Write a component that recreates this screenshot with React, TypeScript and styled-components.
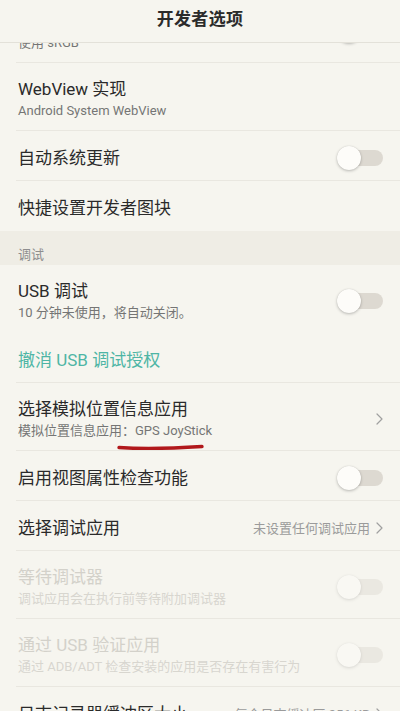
import React from "react";
import styled, { createGlobalStyle, css } from "styled-components";

const GlobalStyle = createGlobalStyle`
  html, body {
    margin: 0;
    padding: 0;
    background: #f6f5ef;
  }
  body {
    font-family: Roboto, "Noto Sans CJK SC", "Noto Sans", sans-serif;
    -webkit-font-smoothing: antialiased;
  }
`;

const Screen = styled.div`
  width: 400px;
  height: 711px;
  overflow: hidden;
  background: #f6f5ef;
  display: flex;
  flex-direction: column;
`;

const Header = styled.header`
  flex: 0 0 auto;
  height: 43px;
  border-bottom: 1px solid #e3e1d9;
  display: flex;
  align-items: center;
  justify-content: center;
  padding-bottom: 8px;
  box-sizing: border-box;
  background: #f6f5ef;
  position: relative;
  z-index: 2;
`;

const HeaderTitle = styled.h1`
  margin: 0;
  font-size: 17px;
  font-weight: 600;
  color: #2b2b2b;
  letter-spacing: 0.3px;
`;

const Viewport = styled.div`
  flex: 1 1 auto;
  overflow: hidden;
`;

const List = styled.div`
  margin-top: -48px;
  display: flex;
  flex-direction: column;
`;

const Row = styled.div<{ $two?: boolean; $flush?: boolean }>`
  position: relative;
  margin-left: 16px;
  padding: 4px 17px 0 2px;
  height: ${(p) => (p.$two ? 68 : 50)}px;
  box-sizing: border-box;
  border-bottom: 1px solid ${(p) => (p.$flush ? "transparent" : "#e9e7e0")};
  display: flex;
  align-items: center;
  gap: 12px;
`;

const Texts = styled.div`
  flex: 1 1 auto;
  min-width: 0;
  display: flex;
  flex-direction: column;
  gap: 2px;
`;

const Title = styled.div<{ $disabled?: boolean; $accent?: boolean }>`
  font-size: 17px;
  line-height: 22px;
  color: #2a2a2a;
  white-space: nowrap;
  ${(p) =>
    p.$accent &&
    css`
      color: #4eb5a5;
    `}
  ${(p) =>
    p.$disabled &&
    css`
      color: #d3d1ca;
    `}
`;

const Sub = styled.div<{ $disabled?: boolean }>`
  font-size: 13px;
  line-height: 18px;
  color: ${(p) => (p.$disabled ? "#d8d6cf" : "#757575")};
  white-space: nowrap;
`;

const Value = styled.span`
  font-size: 13px;
  color: #9b9b9b;
  white-space: nowrap;
`;

const Trail = styled.div`
  flex: 0 0 auto;
  display: flex;
  align-items: center;
  gap: 6px;
`;

const Section = styled.div`
  height: 34px;
  box-sizing: border-box;
  background: #efede5;
  padding: 15px 18px 0;
  font-size: 13px;
  line-height: 18px;
  color: #8e8e8e;
`;

const Track = styled.div<{ $disabled?: boolean }>`
  position: relative;
  width: 40px;
  height: 16px;
  border-radius: 8px;
  background: #ddd9d1;
  margin-left: 6px;
  opacity: ${(p) => (p.$disabled ? 0.45 : 1)};
`;

const Knob = styled.div`
  position: absolute;
  left: -6px;
  top: -4px;
  width: 24px;
  height: 24px;
  border-radius: 50%;
  background: #fdfcf9;
  box-shadow: 0 1px 3px rgba(0, 0, 0, 0.24), 0 0 1px rgba(0, 0, 0, 0.14);
`;

const Marker = styled.svg`
  position: absolute;
  left: 100px;
  top: 59px;
  pointer-events: none;
`;

const Toggle = ({ disabled }: { disabled?: boolean }) => (
  <Track $disabled={disabled}>
    <Knob />
  </Track>
);

const Chevron = () => (
  <svg width="7" height="12" viewBox="0 0 7 12">
    <polyline
      points="1,1 6,6 1,11"
      fill="none"
      stroke="#a0a0a0"
      strokeWidth="1.2"
      strokeLinecap="round"
      strokeLinejoin="round"
    />
  </svg>
);

export default function App() {
  return (
    <>
      <GlobalStyle />
      <Screen>
        <Header>
          <HeaderTitle>开发者选项</HeaderTitle>
        </Header>
        <Viewport>
          <List>
            <Row $two>
              <Texts>
                <Title>模拟颜色空间</Title>
                <Sub>使用 sRGB</Sub>
              </Texts>
              <Trail>
                <Toggle />
              </Trail>
            </Row>
            <Row $two>
              <Texts>
                <Title>WebView 实现</Title>
                <Sub>Android System WebView</Sub>
              </Texts>
            </Row>
            <Row>
              <Texts>
                <Title>自动系统更新</Title>
              </Texts>
              <Trail>
                <Toggle />
              </Trail>
            </Row>
            <Row $flush>
              <Texts>
                <Title>快捷设置开发者图块</Title>
              </Texts>
            </Row>
            <Section>调试</Section>
            <Row $two $flush>
              <Texts>
                <Title>USB 调试</Title>
                <Sub>10 分钟未使用，将自动关闭。</Sub>
              </Texts>
              <Trail>
                <Toggle />
              </Trail>
            </Row>
            <Row>
              <Texts>
                <Title $accent>撤消 USB 调试授权</Title>
              </Texts>
            </Row>
            <Row $two>
              <Texts>
                <Title>选择模拟位置信息应用</Title>
                <Sub>模拟位置信息应用：GPS JoyStick</Sub>
              </Texts>
              <Trail>
                <Chevron />
              </Trail>
              <Marker width="90" height="10" viewBox="0 0 90 10">
                <path
                  d="M3 5.5 C 25 7, 55 6.5, 86 4.5"
                  fill="none"
                  stroke="#b1181b"
                  strokeWidth="3.4"
                  strokeLinecap="round"
                />
              </Marker>
            </Row>
            <Row>
              <Texts>
                <Title>启用视图属性检查功能</Title>
              </Texts>
              <Trail>
                <Toggle />
              </Trail>
            </Row>
            <Row>
              <Texts>
                <Title>选择调试应用</Title>
              </Texts>
              <Trail>
                <Value>未设置任何调试应用</Value>
                <Chevron />
              </Trail>
            </Row>
            <Row $two>
              <Texts>
                <Title $disabled>等待调试器</Title>
                <Sub $disabled>调试应用会在执行前等待附加调试器</Sub>
              </Texts>
              <Trail>
                <Toggle disabled />
              </Trail>
            </Row>
            <Row $two>
              <Texts>
                <Title $disabled>通过 USB 验证应用</Title>
                <Sub $disabled>通过 ADB/ADT 检查安装的应用是否存在有害行为</Sub>
              </Texts>
              <Trail>
                <Toggle disabled />
              </Trail>
            </Row>
            <Row>
              <Texts>
                <Title>日志记录器缓冲区大小</Title>
              </Texts>
              <Trail>
                <Value>每个日志缓冲区 256 KB</Value>
                <Chevron />
              </Trail>
            </Row>
          </List>
        </Viewport>
      </Screen>
    </>
  );
}
